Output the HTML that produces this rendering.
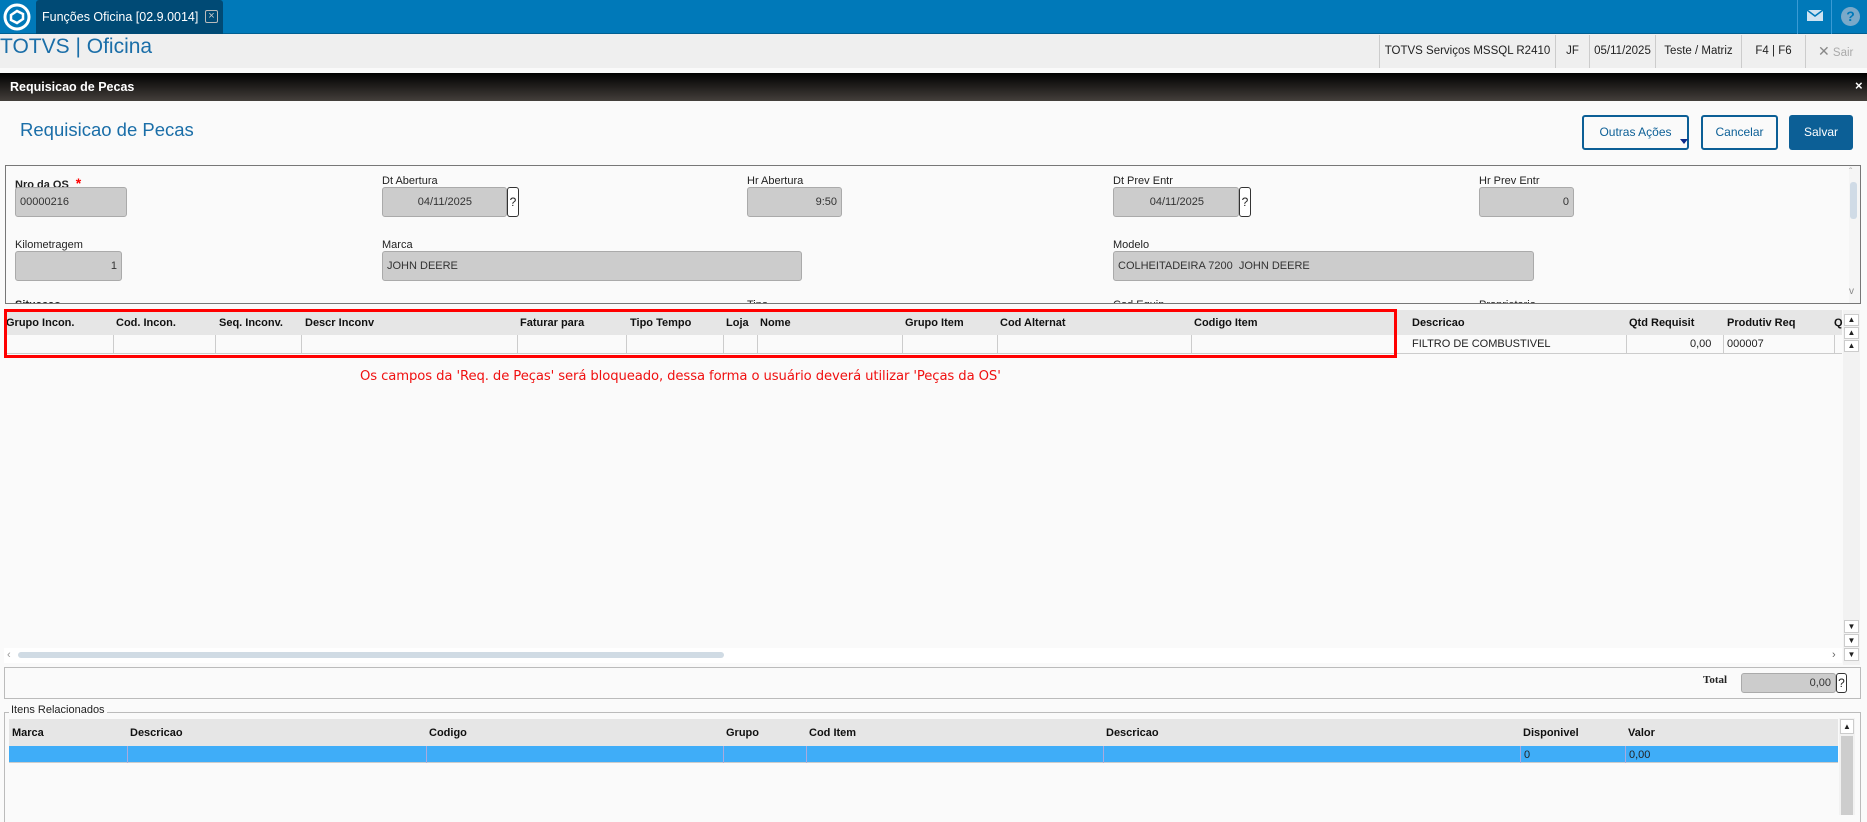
<!DOCTYPE html>
<html><head><meta charset="utf-8">
<style>
*{box-sizing:border-box;margin:0;padding:0}
body{width:1867px;height:815px;overflow:hidden;background:#fafafa;font-family:"Liberation Sans",Arial,sans-serif;font-size:11px;color:#222;position:relative}
.a{position:absolute}
.lbl{position:absolute;font-size:11px;color:#222}
.inp{position:absolute;background:#cccccc;border:1px solid #aaa;border-radius:3px;font-size:11px;color:#333;padding:0 4px;display:flex;align-items:center}
.r{justify-content:flex-end}
.q{position:absolute;border:1px solid #333;border-radius:3px;background:#fff;font-size:12px;display:flex;align-items:center;justify-content:center}
.hd{position:absolute;font-weight:bold;font-size:11px;color:#111}
.sep{position:absolute;width:1px;background:#ccc}
</style></head><body>
<!-- top tab bar -->
<div class="a" style="left:0;top:0;width:1867px;height:34px;background:#0079b9;border-bottom:1px solid #005f92"></div>
<svg class="a" style="left:3px;top:3px" width="28" height="28" viewBox="0 0 28 28"><circle cx="14" cy="14" r="12" fill="none" stroke="#fff" stroke-width="3"/><path d="M8 12 L14 8 L20 11 L20 16 L14 20 L8 17 Z" fill="none" stroke="#fff" stroke-width="2.5"/></svg>
<div class="a" style="left:36px;top:0;height:34px;width:187px;background:#004a75;border-radius:3px 3px 0 0"></div>
<div class="a" style="left:42px;top:10px;color:#fff;font-size:12.5px;white-space:nowrap">Funções Oficina [02.9.0014]</div>
<div class="a" style="left:205px;top:10px;width:13px;height:13px;border:1px solid #bbb;border-radius:2px;color:#ccc;font-size:11px;line-height:11px;text-align:center">×</div>
<div class="a" style="left:1797px;top:0;width:35px;height:34px;border-left:1px solid #3a9ad4;border-right:1px solid #3a9ad4"></div>
<svg class="a" style="left:1807px;top:10px" width="16" height="11" viewBox="0 0 16 11"><rect width="16" height="11" fill="#cfe3f1"/><path d="M0 0 L8 6 L16 0" fill="none" stroke="#0079b9" stroke-width="1.5"/></svg>
<div class="a" style="left:1841px;top:7px;width:19px;height:19px;border-radius:50%;background:#7aa9c9;color:#0079b9;font-weight:bold;font-size:14px;text-align:center;line-height:19px">?</div>
<!-- header -->
<div class="a" style="left:0;top:34px;width:1867px;height:34px;background:#efefef"></div>
<div class="a" style="left:0;top:35px;font-size:21px;color:#1a6ea8">TOTVS | Oficina</div>
<div class="a" style="left:1379px;top:35px;width:488px;height:33px;font-size:11.5px;color:#222">
 <div class="a" style="left:0;top:0;width:176px;height:33px;border-left:1px solid #ccc;text-align:center;line-height:33px;white-space:nowrap">TOTVS Serviços MSSQL R2410</div>
 <div class="a" style="left:176px;top:0;width:34px;height:33px;border-left:1px solid #ccc;text-align:center;line-height:33px">JF</div>
 <div class="a" style="left:210px;top:0;width:66px;height:33px;border-left:1px solid #ccc;text-align:center;line-height:33px">05/11/2025</div>
 <div class="a" style="left:276px;top:0;width:86px;height:33px;border-left:1px solid #ccc;text-align:center;line-height:33px">Teste / Matriz</div>
 <div class="a" style="left:362px;top:0;width:64px;height:33px;border-left:1px solid #ccc;text-align:center;line-height:33px">F4 | F6</div>
 <div class="a" style="left:426px;top:0;width:62px;height:33px;border-left:1px solid #ccc;line-height:33px;padding-left:12px;color:#aaa"><span style="color:#888;font-size:14px">✕</span> Sair</div>
</div>
<!-- black title bar -->
<div class="a" style="left:0;top:73px;width:1867px;height:28px;background:linear-gradient(#000,#443f3b)"></div>
<div class="a" style="left:10px;top:80px;color:#fff;font-weight:bold;font-size:12.5px">Requisicao de Pecas</div>
<div class="a" style="left:1855px;top:78px;color:#fff;font-weight:bold;font-size:13px">×</div>
<!-- page title and buttons -->
<div class="a" style="left:20px;top:119px;font-size:18.5px;color:#1a6ea8">Requisicao de Pecas</div>
<div class="a" style="left:1582px;top:115px;width:107px;height:35px;border:2px solid #0c5f96;border-radius:3px;color:#0c5f96;font-size:12px;text-align:center;line-height:31px">Outras Ações</div>
<div class="a" style="left:1680px;top:139px;width:0;height:0;border-left:4px solid transparent;border-right:4px solid transparent;border-top:5px solid #0b2a8a"></div>
<div class="a" style="left:1701px;top:115px;width:77px;height:35px;border:2px solid #0c5f96;border-radius:3px;color:#0c5f96;font-size:12px;text-align:center;line-height:31px">Cancelar</div>
<div class="a" style="left:1789px;top:115px;width:64px;height:35px;background:#0c5f96;border-radius:3px;color:#fff;font-size:12px;text-align:center;line-height:35px">Salvar</div>
<!-- form panel -->
<div class="a" style="left:5px;top:165px;width:1856px;height:139px;border:1px solid #777;background:#fafafa;overflow:hidden">
 <div class="lbl" style="left:9px;top:9px;font-weight:bold">Nro da OS <span style="color:red;font-size:14px">&nbsp;*</span></div>
 <div class="inp" style="left:9px;top:21px;width:112px;height:30px">00000216</div>
 <div class="lbl" style="left:376px;top:9px">Dt Abertura</div>
 <div class="inp r" style="left:376px;top:21px;width:125px;height:30px;padding-right:34px">04/11/2025</div>
 <div class="q" style="left:501px;top:21px;width:12px;height:30px">?</div>
 <div class="lbl" style="left:741px;top:9px">Hr Abertura</div>
 <div class="inp r" style="left:741px;top:21px;width:95px;height:30px">9:50</div>
 <div class="lbl" style="left:1107px;top:9px">Dt Prev Entr</div>
 <div class="inp r" style="left:1107px;top:21px;width:126px;height:30px;padding-right:34px">04/11/2025</div>
 <div class="q" style="left:1233px;top:21px;width:12px;height:30px">?</div>
 <div class="lbl" style="left:1473px;top:9px">Hr Prev Entr</div>
 <div class="inp r" style="left:1473px;top:21px;width:95px;height:30px">0</div>
 <div class="lbl" style="left:9px;top:73px">Kilometragem</div>
 <div class="inp r" style="left:9px;top:85px;width:107px;height:30px">1</div>
 <div class="lbl" style="left:376px;top:73px">Marca</div>
 <div class="inp" style="left:376px;top:85px;width:420px;height:30px">JOHN DEERE</div>
 <div class="lbl" style="left:1107px;top:73px">Modelo</div>
 <div class="inp" style="left:1107px;top:85px;width:421px;height:30px">COLHEITADEIRA 7200 &nbsp;JOHN DEERE</div>
 <div class="lbl" style="left:9px;top:133px;font-weight:bold">Situacao</div>
 <div class="lbl" style="left:741px;top:133px">Tipo</div>
 <div class="lbl" style="left:1107px;top:133px">Cod Equip</div>
 <div class="lbl" style="left:1473px;top:133px">Proprietario</div>
 <div class="a" style="left:1843px;top:0;width:12px;height:137px;background:#f5f5f5"></div>
 <div class="a" style="left:1844px;top:16px;width:7px;height:37px;background:#d0dbe6;border-radius:3px"></div>
 <div class="a" style="left:1843px;top:1px;color:#aaa;font-size:10px">ˆ</div>
 <div class="a" style="left:1843px;top:120px;color:#888;font-size:10px">v</div>
</div>
<!-- main grid -->
<div class="a" style="left:4px;top:310px;width:1838px;height:25px;background:#e6e6e6"></div>
<div class="a" style="left:4px;top:335px;width:1838px;height:19px;background:#fafafa;border-bottom:1px solid #ccc"></div>
<div class="hd" style="left:6px;top:317px">Grupo Incon.</div>
<div class="hd" style="left:116px;top:317px">Cod. Incon.</div>
<div class="hd" style="left:219px;top:317px">Seq. Inconv.</div>
<div class="hd" style="left:305px;top:317px">Descr Inconv</div>
<div class="hd" style="left:520px;top:317px">Faturar para</div>
<div class="hd" style="left:630px;top:317px">Tipo Tempo</div>
<div class="hd" style="left:726px;top:317px">Loja</div>
<div class="hd" style="left:760px;top:317px">Nome</div>
<div class="hd" style="left:905px;top:317px">Grupo Item</div>
<div class="hd" style="left:1000px;top:317px">Cod Alternat</div>
<div class="hd" style="left:1194px;top:317px">Codigo Item</div>
<div class="hd" style="left:1412px;top:317px">Descricao</div>
<div class="hd" style="left:1629px;top:317px">Qtd Requisit</div>
<div class="hd" style="left:1727px;top:317px">Produtiv Req</div>
<div class="hd" style="left:1834px;top:317px">Q</div>
<div class="sep" style="left:113px;top:335px;height:19px"></div>
<div class="sep" style="left:215px;top:335px;height:19px"></div>
<div class="sep" style="left:301px;top:335px;height:19px"></div>
<div class="sep" style="left:517px;top:335px;height:19px"></div>
<div class="sep" style="left:626px;top:335px;height:19px"></div>
<div class="sep" style="left:723px;top:335px;height:19px"></div>
<div class="sep" style="left:757px;top:335px;height:19px"></div>
<div class="sep" style="left:902px;top:335px;height:19px"></div>
<div class="sep" style="left:997px;top:335px;height:19px"></div>
<div class="sep" style="left:1191px;top:335px;height:19px"></div>
<div class="sep" style="left:1626px;top:335px;height:19px"></div>
<div class="sep" style="left:1723px;top:335px;height:19px"></div>
<div class="sep" style="left:1834px;top:335px;height:19px"></div>
<div class="a" style="left:1412px;top:338px;font-size:11px">FILTRO DE COMBUSTIVEL</div>
<div class="a" style="left:1690px;top:338px;font-size:11px">0,00</div>
<div class="a" style="left:1727px;top:338px;font-size:11px">000007</div>
<div class="a" style="left:4px;top:309px;width:1393px;height:49px;border:3px solid #f00"></div>
<div class="a" style="left:360px;top:369px;color:#f01010;font-size:13.2px;font-family:'DejaVu Sans',sans-serif;letter-spacing:-0.1px;white-space:nowrap">Os campos da 'Req. de Peças' será bloqueado, dessa forma o usuário deverá utilizar 'Peças da OS'</div>
<!-- grid right buttons -->
<div class="a" style="left:1843px;top:310px;width:17px;height:355px;background:#f2f2f2"></div>
<div class="a" style="left:1844px;top:314px;width:15px;height:12px;border:1px solid #ccc;background:#fff;font-size:8px;text-align:center;line-height:10px">▲</div>
<div class="a" style="left:1844px;top:327px;width:15px;height:12px;border:1px solid #ccc;background:#fff;font-size:8px;text-align:center;line-height:10px">▲</div>
<div class="a" style="left:1844px;top:340px;width:15px;height:12px;border:1px solid #ccc;background:#fff;font-size:8px;text-align:center;line-height:10px">▲</div>
<div class="a" style="left:1844px;top:620px;width:15px;height:13px;border:1px solid #ccc;background:#fff;font-size:8px;text-align:center;line-height:11px">▼</div>
<div class="a" style="left:1844px;top:634px;width:15px;height:13px;border:1px solid #ccc;background:#fff;font-size:8px;text-align:center;line-height:11px">▼</div>
<div class="a" style="left:1844px;top:648px;width:15px;height:13px;border:1px solid #ccc;background:#fff;font-size:8px;text-align:center;line-height:11px">▼</div>
<!-- horizontal scroll -->
<div class="a" style="left:4px;top:648px;width:1838px;height:15px;background:#fff"></div>
<div class="a" style="left:7px;top:649px;color:#999;font-size:11px">‹</div>
<div class="a" style="left:18px;top:652px;width:706px;height:6px;background:#d0dbe4;border-radius:3px"></div>
<div class="a" style="left:1832px;top:649px;color:#666;font-size:11px">›</div>
<!-- total -->
<div class="a" style="left:4px;top:667px;width:1857px;height:32px;border:1px solid #bbb"></div>
<div class="a" style="left:1703px;top:674px;font-family:'Liberation Serif',serif;font-weight:bold;font-size:11px">Total</div>
<div class="inp r" style="left:1741px;top:673px;width:95px;height:20px">0,00</div>
<div class="q" style="left:1836px;top:673px;width:11px;height:20px">?</div>
<!-- itens relacionados -->
<div class="a" style="left:4px;top:712px;width:1857px;height:110px;border:1px solid #bbb;border-bottom:none"></div>
<div class="a" style="left:9px;top:704px;background:#fafafa;padding:0 2px;font-size:11px">Itens Relacionados</div>
<div class="a" style="left:9px;top:719px;width:1829px;height:27px;background:#e6e6e6"></div>
<div class="a" style="left:9px;top:746px;width:1829px;height:17px;background:#3fadf8;border-bottom:1px solid #ccc"></div>
<div class="hd" style="left:12px;top:727px">Marca</div>
<div class="hd" style="left:130px;top:727px">Descricao</div>
<div class="hd" style="left:429px;top:727px">Codigo</div>
<div class="hd" style="left:726px;top:727px">Grupo</div>
<div class="hd" style="left:809px;top:727px">Cod Item</div>
<div class="hd" style="left:1106px;top:727px">Descricao</div>
<div class="hd" style="left:1523px;top:727px">Disponivel</div>
<div class="hd" style="left:1628px;top:727px">Valor</div>
<div class="sep" style="left:127px;top:746px;height:17px;background:#aad"></div>
<div class="sep" style="left:426px;top:746px;height:17px;background:#aad"></div>
<div class="sep" style="left:723px;top:746px;height:17px;background:#aad"></div>
<div class="sep" style="left:806px;top:746px;height:17px;background:#aad"></div>
<div class="sep" style="left:1103px;top:746px;height:17px;background:#aad"></div>
<div class="sep" style="left:1520px;top:746px;height:17px;background:#aad"></div>
<div class="sep" style="left:1625px;top:746px;height:17px;background:#aad"></div>
<div class="a" style="left:1524px;top:749px">0</div>
<div class="a" style="left:1629px;top:749px">0,00</div>
<div class="a" style="left:1839px;top:718px;width:16px;height:97px;background:#f2f2f2"></div>
<div class="a" style="left:1840px;top:719px;width:14px;height:15px;border:1px solid #ccc;background:#fff;font-size:8px;text-align:center;line-height:13px">▲</div>
<div class="a" style="left:1841px;top:736px;width:12px;height:79px;background:#cdcdcd"></div>
</body></html>
